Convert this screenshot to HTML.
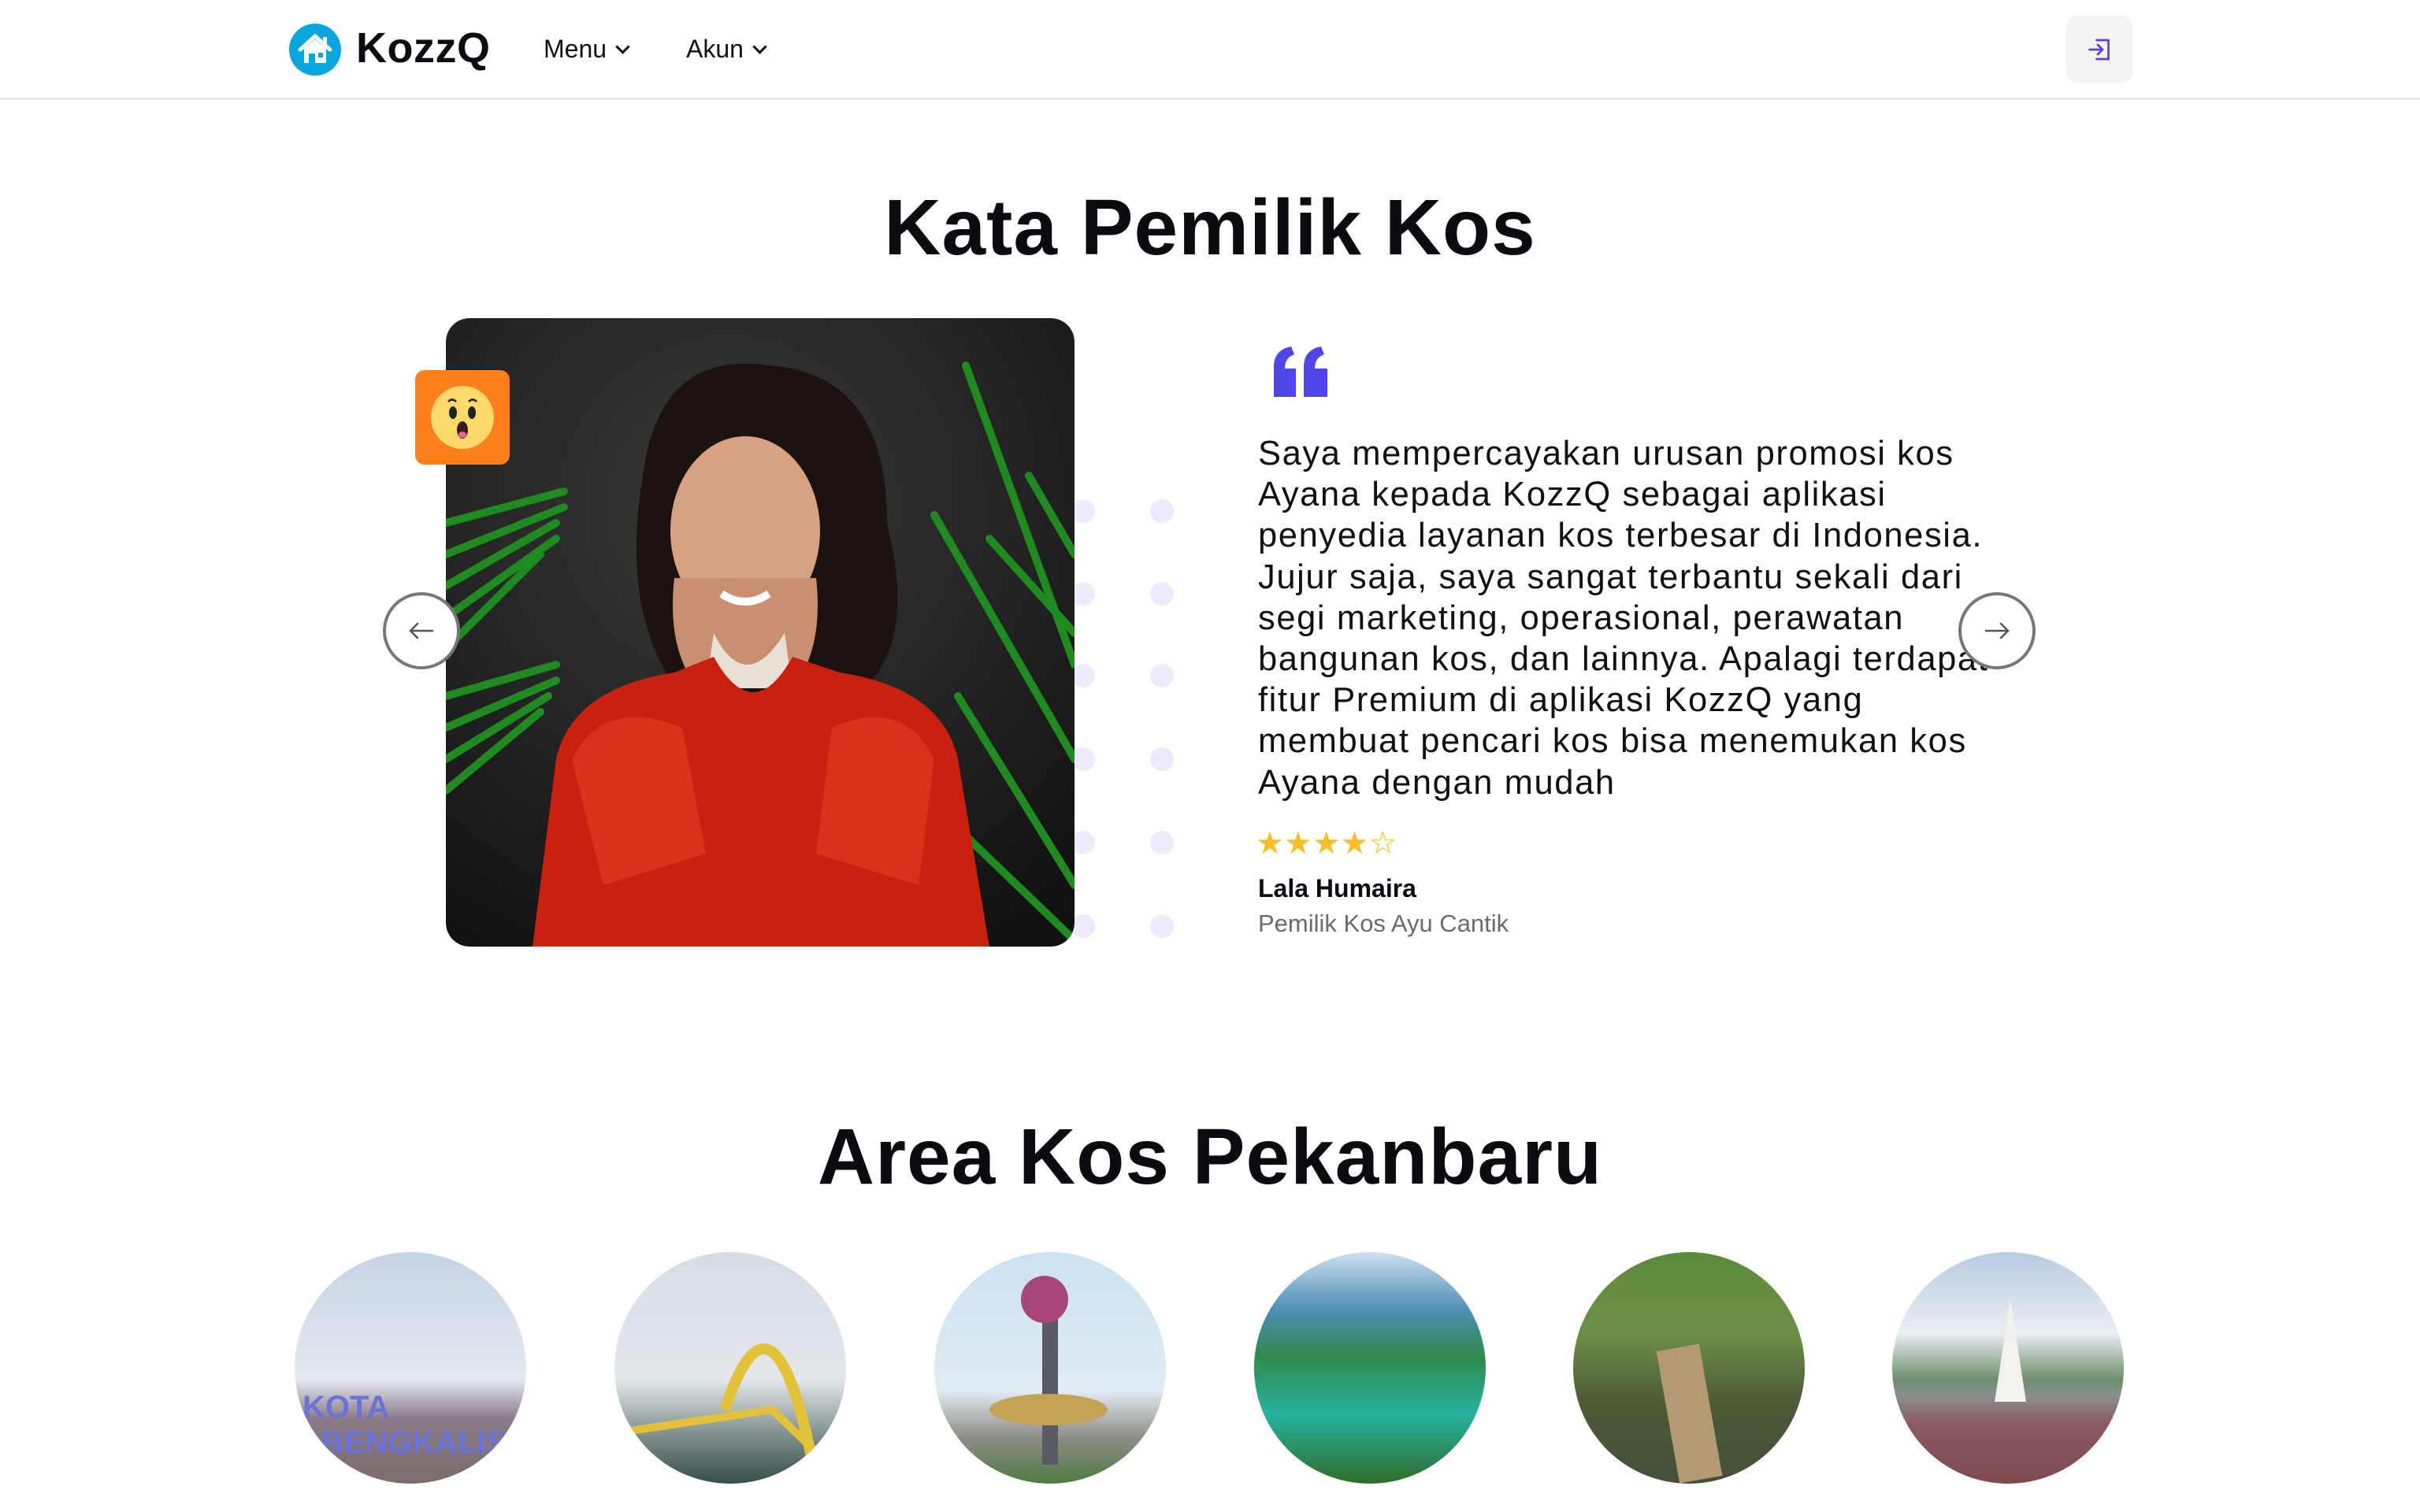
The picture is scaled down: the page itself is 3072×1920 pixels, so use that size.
<!DOCTYPE html>
<html><head><meta charset="utf-8"><style>
*{margin:0;padding:0;box-sizing:border-box}
body{width:3072px;height:1920px;overflow:hidden;background:#fff;font-family:"Liberation Sans",sans-serif;color:#111;position:relative}
.abs{position:absolute}
.hdr{left:0;top:0;width:3072px;height:127px;border-bottom:3px solid #e5e7eb}
.nav{font-size:32px;color:#111;top:44px}
.chev{display:inline-block;width:13px;height:13px;border-right:3.5px solid #111;border-bottom:3.5px solid #111;transform:rotate(45deg);margin-left:14px;position:relative;top:-7px}
h2{position:absolute;left:0;width:3072px;text-align:center;font-weight:700;font-size:100px;letter-spacing:1px;color:#0b0b12}
.dot{position:absolute;width:30px;height:30px;border-radius:50%;background:#ebebfb}
.arrow{position:absolute;width:98px;height:98px;border-radius:50%;border:4px solid #777;background:#fff}
.quote{left:1597px;top:550px;font-size:43.5px;line-height:52.2px;letter-spacing:1.6px;color:#111;white-space:nowrap}
.circ{position:absolute;top:1590px;width:294px;height:294px;border-radius:50%;overflow:hidden}
</style></head><body>
<div class="abs hdr"></div>
<svg class="abs" style="left:367px;top:30px" width="66" height="66" viewBox="0 0 66 66">
<circle cx="33" cy="33" r="33" fill="#07a6dc"/>
<path d="M14 33 L33 16 L52 33" stroke="#fff" stroke-width="5" fill="none" stroke-linecap="round"/>
<rect x="43" y="17" width="5" height="10" fill="#fff"/>
<path d="M19 32 L33 20 L47 32 V50 H19Z" fill="#fff"/>
<rect x="25" y="38" width="8" height="12" fill="#07a6dc"/>
<rect x="37" y="37" width="6" height="6" fill="#07a6dc"/>
</svg>
<div class="abs" style="left:452px;top:30px;font-size:54px;font-weight:700;color:#0b0b12;letter-spacing:0.5px">KozzQ</div>
<div class="abs nav" style="left:690px">Menu<span class="chev"></span></div>
<div class="abs nav" style="left:871px">Akun<span class="chev"></span></div>
<div class="abs" style="left:2623px;top:20px;width:84px;height:85px;border-radius:14px;background:#f3f3f4"></div>
<svg class="abs" style="left:2648px;top:45px" width="36" height="36" viewBox="0 0 24 24" fill="none" stroke="#5b3ee6" stroke-width="1.8" stroke-linecap="round" stroke-linejoin="round"><path d="M9 4h10v16H9"/><path d="M3 12h11"/><path d="M10 8l4 4-4 4"/></svg>

<h2 style="top:232px">Kata Pemilik Kos</h2>

<div class="dot" style="left:1360px;top:634px"></div><div class="dot" style="left:1460px;top:634px"></div>
<div class="dot" style="left:1360px;top:739px"></div><div class="dot" style="left:1460px;top:739px"></div>
<div class="dot" style="left:1360px;top:843px"></div><div class="dot" style="left:1460px;top:843px"></div>
<div class="dot" style="left:1360px;top:949px"></div><div class="dot" style="left:1460px;top:949px"></div>
<div class="dot" style="left:1360px;top:1055px"></div><div class="dot" style="left:1460px;top:1055px"></div>
<div class="dot" style="left:1360px;top:1161px"></div><div class="dot" style="left:1460px;top:1161px"></div>

<svg class="abs" style="left:566px;top:404px;border-radius:30px" width="798" height="798" viewBox="0 0 798 798">
<defs><radialGradient id="bg" cx="45%" cy="30%" r="80%"><stop offset="0" stop-color="#3a3a3a"/><stop offset="1" stop-color="#121212"/></radialGradient>
<clipPath id="c"><rect width="798" height="798" rx="30"/></clipPath></defs>
<g clip-path="url(#c)">
<rect width="798" height="798" fill="url(#bg)"/>
<g stroke="#1f8a1f" stroke-width="10" stroke-linecap="round">
<path d="M0 260 L150 220 M0 300 L150 240 M0 340 L140 260 M0 380 L140 280 M0 420 L120 300"/>
<path d="M0 480 L140 440 M0 520 L140 460 M0 560 L130 480 M0 600 L120 500"/>
<path d="M660 60 L798 440 M620 250 L798 560 M690 280 L798 400 M650 480 L798 720 M600 600 L798 790 M740 200 L798 300"/>
</g>
<path d="M250 200 Q270 40 410 60 Q560 70 560 260 Q600 420 520 480 L300 480 Q220 380 250 200Z" fill="#1c1210"/>
<ellipse cx="380" cy="270" rx="95" ry="120" fill="#d8a282"/>
<path d="M290 330 Q280 420 320 470 L440 470 Q480 420 470 330Z" fill="#c88f70"/>
<path d="M340 400 Q380 480 430 400 L440 470 L330 470Z" fill="#e8e0d4"/>
<path d="M110 798 L140 560 Q160 470 290 450 L340 430 Q390 520 440 430 L500 450 Q630 470 650 560 L690 798Z" fill="#c9200f"/>
<path d="M160 560 Q200 480 300 520 L330 680 L200 720Z" fill="#d8331a"/>
<path d="M620 560 Q580 480 490 520 L470 680 L600 720Z" fill="#d8331a"/>
<path d="M350 350 Q380 370 410 350" stroke="#fff" stroke-width="10" fill="none"/>
</g></svg>
<div class="abs" style="left:527px;top:470px;width:120px;height:120px;border-radius:12px;background:#fe7f1b"></div>
<svg class="abs" style="left:545px;top:488px" width="84" height="84" viewBox="0 0 84 84">
<circle cx="42" cy="42" r="40" fill="#fdd86a"/>
<ellipse cx="30" cy="36" rx="5" ry="8" fill="#222"/><ellipse cx="54" cy="36" rx="5" ry="8" fill="#222"/>
<path d="M24 22 Q29 17 34 22 M50 22 Q55 17 60 22" stroke="#222" stroke-width="2.5" fill="none"/>
<ellipse cx="42" cy="58" rx="7" ry="11" fill="#3a1a1a"/><ellipse cx="42" cy="64" rx="5" ry="4" fill="#f06090"/>
</svg>

<svg class="abs" style="left:1615px;top:440px" width="74" height="64" viewBox="0 0 74 64">
<path d="M2 64 V26 Q2 4 24 0 L28 10 Q16 14 16 28 H30 V64Z" fill="#4f46e5"/>
<path d="M40 64 V26 Q40 4 62 0 L66 10 Q54 14 54 28 H70 V64Z" fill="#4f46e5"/>
</svg>
<div class="abs quote">Saya mempercayakan urusan promosi kos<br>Ayana kepada KozzQ sebagai aplikasi<br>penyedia layanan kos terbesar di Indonesia.<br>Jujur saja, saya sangat terbantu sekali dari<br>segi marketing, operasional, perawatan<br>bangunan kos, dan lainnya. Apalagi terdapat<br>fitur Premium di aplikasi KozzQ yang<br>membuat pencari kos bisa menemukan kos<br>Ayana dengan mudah</div>

<div class="arrow" style="left:486px;top:752px"></div>
<svg class="abs" style="left:518px;top:786px" width="34" height="30" viewBox="0 0 34 30" fill="none" stroke="#555" stroke-width="2.5" stroke-linecap="round"><path d="M3 15h28M12 6l-9 9 9 9"/></svg>
<div class="arrow" style="left:2486px;top:752px"></div>
<svg class="abs" style="left:2518px;top:786px" width="34" height="30" viewBox="0 0 34 30" fill="none" stroke="#555" stroke-width="2.5" stroke-linecap="round"><path d="M3 15h28M22 6l9 9-9 9"/></svg>

<div class="abs" style="left:1594px;top:1048px;font-size:40px;color:#f8bf2a;letter-spacing:0px">★★★★☆</div>
<div class="abs" style="left:1597px;top:1110px;font-size:32px;font-weight:700;color:#0b0b12">Lala Humaira</div>
<div class="abs" style="left:1597px;top:1155px;font-size:31px;color:#6b6b6b">Pemilik Kos Ayu Cantik</div>

<h2 style="top:1412px">Area Kos Pekanbaru</h2>

<div class="circ" style="left:374px;background:linear-gradient(#c5d3e6 0%,#e4e9ef 55%,#8a7a88 72%,#7b6c6c 100%)"><div class="abs" style="left:10px;top:175px;font-size:40px;font-weight:700;color:#6a73d8">KOTA<br>♥BENGKALIS</div></div>
<div class="circ" style="left:780px;background:linear-gradient(#d5dde4 0%,#e2e7eb 55%,#7c8b8a 80%,#35504a 100%)"><svg class="abs" style="left:0;top:0" width="294" height="294"><path d="M0 230 L200 200 L294 290" stroke="#e3c13a" stroke-width="10" fill="none"/><path d="M140 200 Q200 20 250 260" stroke="#e3c13a" stroke-width="14" fill="none"/></svg></div>
<div class="circ" style="left:1186px;background:linear-gradient(#cbe2f3 0%,#e1ebf2 60%,#8d8d86 80%,#4f7a44 100%)"><div class="abs" style="left:137px;top:40px;width:20px;height:230px;background:#5a5b62"></div><div class="abs" style="left:110px;top:30px;width:60px;height:60px;border-radius:50%;background:#a8457a"></div><div class="abs" style="left:70px;top:180px;width:150px;height:40px;border-radius:50%;background:#c4a256"></div></div>
<div class="circ" style="left:1592px;background:linear-gradient(#cfe0f0 0%,#4d8fb4 25%,#2f8a4a 45%,#27b2a0 70%,#2f6d2a 100%)"></div>
<div class="circ" style="left:1997px;background:linear-gradient(#5d8a3a 0%,#6e8f48 35%,#4c5a36 65%,#45503a 100%)"><div class="abs" style="left:120px;top:120px;width:55px;height:170px;background:#b49a72;transform:rotate(-10deg)"></div></div>
<div class="circ" style="left:2402px;background:linear-gradient(#b8cbe2 0%,#eaeef3 35%,#6e8f6a 55%,#8a8e8e 62%,#8c5860 75%,#7e4a50 100%)"><div class="abs" style="left:130px;top:60px;width:0;height:0;border-left:20px solid transparent;border-right:20px solid transparent;border-bottom:130px solid #f4f2ee"></div></div>
</body></html>
